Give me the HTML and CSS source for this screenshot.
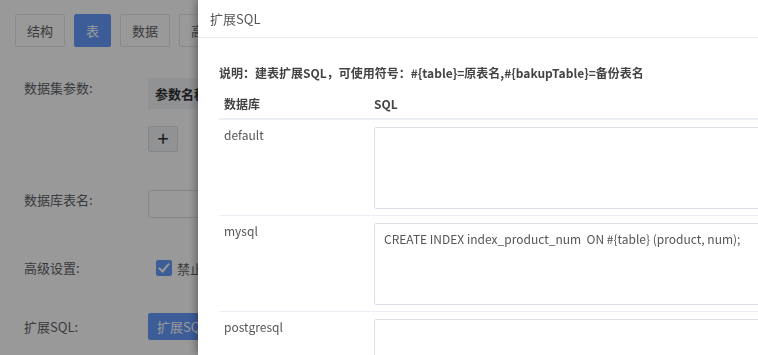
FILE: index.html
```html
<!DOCTYPE HTML>
<html>
<head>
<meta charset="utf-8">
<title>扩展SQL</title>
<link rel="stylesheet" href="styles.css">
</head>
<body>
<div id="page">
	<ul class="tabs">
		<li>结构</li>
		<li class="active">表</li>
		<li>数据</li>
		<li>高级</li>
	</ul>
	<div class="form">
		<div class="row rowParam">
			<label>数据集参数:</label>
			<div class="ctrl">
				<div class="paramHead">参数名称</div>
				<a href="javascript:;" class="btnAdd">+</a>
			</div>
		</div>
		<div class="row rowTable">
			<label>数据库表名:</label>
			<div class="ctrl"><input type="text" class="ipt"></div>
		</div>
		<div class="row rowAdv">
			<label>高级设置:</label>
			<div class="ctrl"><span class="chk"></span><span class="chkText">禁止删除</span></div>
		</div>
		<div class="row rowSql">
			<label>扩展SQL:</label>
			<div class="ctrl"><a href="javascript:;" class="btnBlue">扩展SQL</a></div>
		</div>
	</div>
</div>
<div id="mask"></div>
<div id="dialog">
	<div class="dlgTitle">扩展SQL</div>
	<div class="dlgBody">
		<p class="tip">说明：建表扩展SQL，可使用符号：#{table}=原表名,#{bakupTable}=备份表名</p>
		<table class="sqlTable">
			<thead>
				<tr><th class="colDb">数据库</th><th>SQL</th></tr>
			</thead>
			<tbody>
				<tr><td>default</td><td><textarea></textarea></td></tr>
				<tr><td>mysql</td><td><textarea>CREATE INDEX index_product_num  ON #{table} (product, num);</textarea></td></tr>
				<tr><td>postgresql</td><td><textarea></textarea></td></tr>
			</tbody>
		</table>
	</div>
</div>
</body>
</html>
```

FILE: styles.css
```css
/* reset start */
html,body{ overflow:hidden; height:100%;}
body,p,ul,table{ padding:0; margin:0;}
body{ font:13px "Noto Sans CJK SC",sans-serif; color:#606266; background:#fff;}
li{ list-style:none;}
a{ text-decoration:none;}
/* reset end */

/* page start */
#page{ padding:14px 0 0 15px;}
.tabs{ display:flex; gap:9px; height:33px;}
.tabs li{ height:31px; line-height:31px; padding:0 11px; border:1px solid #e6e6e6; border-radius:2px; color:#606266;}
.tabs li.active{ background:#669cff; border-color:#669cff; color:#fff;}

.form{ padding-left:9px;}
.row{ display:flex;}
.row label{ width:124px; flex-shrink:0; line-height:18px;}
.rowParam{ margin-top:31px;}
.rowParam label{ line-height:20px;}
.paramHead{ width:200px; height:31px; line-height:31px; padding-left:7px; background:#f2f3f5; font-weight:bold; color:#303133;}
.btnAdd{ display:block; width:28px; height:24px; margin-top:17px; border:1px solid #dcdfe6; background:#f2f3f5; border-radius:2px; text-align:center; line-height:22px; font-size:20px; color:#303133;}
.rowTable{ margin-top:38px;}
.rowTable label{ line-height:18px; padding-top:1px;}
.ipt{ width:200px; height:28px; box-sizing:border-box; border:1px solid #dcdfe6; border-radius:3px; margin:0; display:block;}
.rowAdv{ margin-top:36px; align-items:center; height:28px;}
.rowAdv .ctrl{ display:flex; align-items:center; padding-left:8px;}
.chk{ width:16px; height:16px; background:#669cff; border-radius:2px; position:relative;}
.chk:after{ content:""; position:absolute; left:5px; top:1px; width:4px; height:9px; border:solid #fff; border-width:0 2px 2px 0; transform:rotate(40deg);}
.chkText{ margin-left:5px;}
.rowSql{ margin-top:31px; align-items:center; height:27px;}
.btnBlue{ display:block; height:27px; line-height:27px; padding:0 9px; background:#669cff; color:#fff; border-radius:2px;}
/* page end */

/* dialog start */
#mask{ position:fixed; left:0; top:0; right:0; bottom:0; background:rgba(0,0,0,.4);}
#dialog{ position:fixed; left:198px; top:0; width:640px; height:100%; background:#fff; box-shadow:-2px 0 8px rgba(0,0,0,.35);}
.dlgTitle{ height:37px; line-height:37px; padding-left:12px; border-bottom:1px solid #ebeef5; color:#555; font-size:13px;}
.dlgBody{ padding:26px 0 0 21px;}
.tip{ font-size:12px; font-weight:bold; color:#444; line-height:18px;}
.sqlTable{ width:100%; border-collapse:collapse; margin-top:6px; font-size:12px;}
.sqlTable th{ text-align:left; font-weight:bold; color:#444; height:30px; padding:0 5px; border-bottom:2px solid #ebeef5;}
.sqlTable .colDb{ width:140px;}
.sqlTable td{ vertical-align:top; padding:7px 5px 6px; border-bottom:1px solid #ebeef5; color:#555; line-height:16px;}
.sqlTable textarea{ display:block; width:100%; height:82px; box-sizing:border-box; margin:0; padding:6px 9px; border:1px solid #dcdfe6; border-radius:2px; resize:none; font:12px "Noto Sans CJK SC",sans-serif; color:#555; line-height:17px;}
/* dialog end */
```
